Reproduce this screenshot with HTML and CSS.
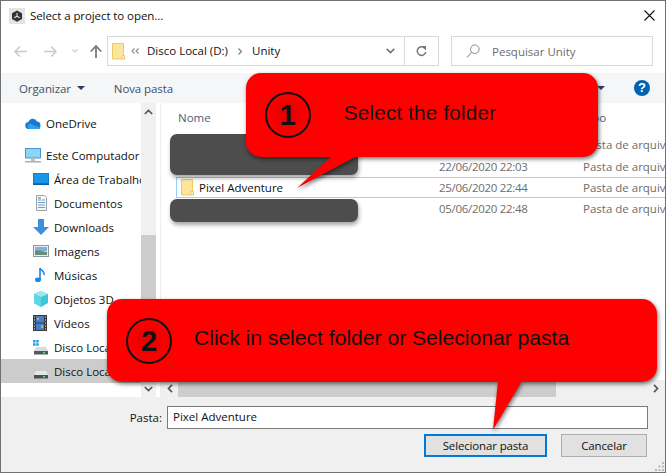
FILE: index.html
```html
<!DOCTYPE html>
<html lang="en">
  <head>
    <meta charset="UTF-8" />
    <title>Select a project to open...</title>
    <link rel="stylesheet" href="styles.css">
  </head>
  <body>
    <div class="dialog">
      <div class="titlebar">
        <svg class="unity-icon" width="16" height="16" viewBox="0 0 16 16">
          <rect width="16" height="16" fill="#e4e4e4"/>
          <path d="M8 2.500l5 2.800v5.600l-5 2.800-5-2.800V5.300z" fill="#333"/>
          <path d="M8 5v3.200l2.800 1.600M8 8.200L5.200 9.800" stroke="#e4e4e4" stroke-width="1.100" fill="none"/>
        </svg>
        <span class="title">Select a project to open...</span>
        <svg class="close-icon" width="11" height="11" viewBox="0 0 11 11">
          <path d="M.5.5l10 10M10.500.5l-10 10" stroke="#111" stroke-width="1.100"/>
        </svg>
      </div>

      <div class="addressrow">
        <div class="navbtns">
          <svg width="13" height="11" viewBox="0 0 13 11"><path d="M6 .5l-5 5 5 5M1 5.500h12" stroke="#c9c9c9" stroke-width="1.500" fill="none"/></svg>
          <svg width="13" height="11" viewBox="0 0 13 11"><path d="M7 .5l5 5-5 5M12 5.500H0" stroke="#c9c9c9" stroke-width="1.500" fill="none"/></svg>
          <svg width="6" height="4" viewBox="0 0 6 4"><path d="M.5.5L3 3 5.500.5" stroke="#c9c9c9" stroke-width="1.200" fill="none"/></svg>
          <svg width="12" height="13" viewBox="0 0 12 13"><path d="M.8 6.500L6 1l5.200 5.500M6 1v12" stroke="#7b7b7b" stroke-width="1.800" fill="none"/></svg>
        </div>
        <div class="pathbox">
          <svg class="folder" width="13" height="17" viewBox="0 0 13 17"><path d="M.5.5h11v12h-1.500v3.500H.5z" fill="#fbe69c" stroke="#eccb66"/><path d="M10 16h2.500v-4" fill="#fbe69c" stroke="#eccb66"/></svg>
          <svg class="crumb-more" width="8" height="6" viewBox="0 0 8 6"><path d="M3.500.5L1 3l2.500 2.500M7.500.5L5 3l2.500 2.500" stroke="#8a8a8a" stroke-width="1.100" fill="none"/></svg>
          <span class="crumb">Disco Local (D:)</span>
          <svg class="crumb-sep" width="4" height="7" viewBox="0 0 4 7"><path d="M.5.5l3 3-3 3" stroke="#777" stroke-width="1.100" fill="none"/></svg>
          <span class="crumb">Unity</span>
          <svg class="path-chevron" width="9" height="6" viewBox="0 0 9 6"><path d="M.7.8L4.500 4.500 8.300.8" stroke="#777" stroke-width="1.700" fill="none"/></svg>
          <div class="refresh">
            <svg width="11" height="11" viewBox="0 0 11 11"><path d="M8.800 2.200A4.300 4.300 0 1 0 9.800 6" stroke="#777" stroke-width="1.500" fill="none"/><path d="M5.500 0h4.500v4.500z" fill="#777"/></svg>
          </div>
        </div>
        <div class="searchbox">
          <svg width="14" height="14" viewBox="0 0 14 14"><circle cx="8.800" cy="5.200" r="4.300" fill="none" stroke="#8a8a8a"/><path d="M5.800 8.300L.8 13.300" stroke="#b59b80" stroke-width="1.100"/></svg>
          <span>Pesquisar Unity</span>
        </div>
      </div>

      <div class="toolbar">
        <span class="tool">Organizar</span>
        <span class="caret"></span>
        <span class="tool tool-new">Nova pasta</span>
        <span class="caret caret-view"></span>
        <span class="help">?</span>
      </div>

      <div class="main">
        <nav class="sidebar">
          <div class="navitem navitem-top navitem-drive">
            <svg width="16" height="11" viewBox="0 0 16 11"><path d="M4 11a3.500 3.500 0 0 1-.500-7A4.500 4.500 0 0 1 12 3.500 3.800 3.800 0 0 1 12.500 11z" fill="#1a77d2"/><path d="M4 11a3 3 0 0 1 1-5.500c2 0 3 1 4 2l6.500 2a2 2 0 0 1-2.500 1.500z" fill="#2ea3e6"/></svg>
            <span>OneDrive</span>
          </div>
          <div class="navitem navitem-top">
            <svg width="16" height="15" viewBox="0 0 16 15"><rect x=".5" y=".5" width="15" height="9.500" fill="#8fd3f7" stroke="#3e9ad3"/><rect x="6" y="10" width="4" height="3" fill="#b9bfc4"/><rect y="13" width="16" height="1.500" fill="#a9b0b6"/></svg>
            <span>Este Computador</span>
          </div>
          <div class="navitem">
            <svg width="16" height="12" viewBox="0 0 16 12"><rect width="16" height="11" fill="#0f7ed8"/><rect x="1" y="1" width="14" height="9" fill="#1b95ea"/><rect y="10.500" width="16" height="1.500" fill="#0a5ea8"/></svg>
            <span>&Aacute;rea de Trabalho</span>
          </div>
          <div class="navitem">
            <svg width="16" height="16" viewBox="0 0 16 16"><path d="M3.500.5h8l2 2v13h-10z" fill="#f6f7f8" stroke="#9aa3ab"/><path d="M5 5h3M9 5h3M5 7.500h7M5 10h7M5 12.500h7" stroke="#6f9fc8"/><path d="M5 3h3" stroke="#2c7cc0"/></svg>
            <span>Documentos</span>
          </div>
          <div class="navitem">
            <svg width="16" height="16" viewBox="0 0 16 16"><path d="M5 0h6v8h5l-8 8-8-8h5z" fill="#3d8fdc"/></svg>
            <span>Downloads</span>
          </div>
          <div class="navitem">
            <svg width="16" height="12" viewBox="0 0 16 12"><rect x=".5" y=".5" width="15" height="11" fill="#e6eef3" stroke="#8d979e"/><rect x="2" y="2" width="12" height="4" fill="#7fb2d9"/><path d="M2 6c3-1 6 0 12 1v3H2z" fill="#6c8b74"/></svg>
            <span>Imagens</span>
          </div>
          <div class="navitem">
            <svg width="16" height="16" viewBox="0 0 16 16"><path d="M7 1v11.500" stroke="#1b87e0" stroke-width="1.600"/><path d="M7 1c1 3 5 3 4 7" stroke="#1b87e0" stroke-width="1.400" fill="none"/><ellipse cx="5" cy="12.800" rx="3" ry="2.300" fill="#1b87e0"/></svg>
            <span>M&uacute;sicas</span>
          </div>
          <div class="navitem">
            <svg width="16" height="16" viewBox="0 0 16 16"><path d="M8 0l7 3v9l-7 4-7-4V3z" fill="#3fc4dc"/><path d="M1 3l7 3 7-3-7-3z" fill="#9be8f2"/><path d="M8 6v10l-7-4V3z" fill="#5ed6e6"/></svg>
            <span>Objetos 3D</span>
          </div>
          <div class="navitem">
            <svg width="14" height="16" viewBox="0 0 14 16"><rect width="14" height="16" fill="#3a3a3a"/><rect x="3" y="1" width="8" height="6.500" fill="#3f7fd0"/><rect x="3" y="8.500" width="8" height="6.500" fill="#3f7fd0"/><path d="M4 3h2v2H4zM8 10h2v3H8z" fill="#d9a83a"/><path d="M1 2h1M1 5h1M1 8h1M1 11h1M1 14h1M12 2h1M12 5h1M12 8h1M12 11h1M12 14h1" stroke="#eee"/></svg>
            <span class="video-label">V&iacute;deos</span>
          </div>
          <div class="navitem">
            <svg width="16" height="15" viewBox="0 0 16 15"><path d="M0 0h2.500v2.500H0zM3.200 0h2.500v2.500H3.200zM0 3.200h2.500v2.500H0zM3.200 3.200h2.500v2.500H3.200z" fill="#18a0e8"/><path d="M3 7h10l2 4H1z" fill="#d9dcde"/><rect x="1" y="11" width="14" height="3.500" fill="#55595c"/><rect x="10" y="12" width="2" height="1.500" fill="#5fe05a"/></svg>
            <span>Disco Local (C:)</span>
          </div>
          <div class="navitem navitem-selected">
            <svg width="16" height="15" viewBox="0 0 16 15"><path d="M3 7h10l2 4H1z" fill="#e4e6e7"/><rect x="1" y="11" width="14" height="3.500" fill="#4c5053"/><rect x="10" y="12" width="2" height="1.500" fill="#5fe05a"/></svg>
            <span>Disco Local (D:)</span>
          </div>
          <div class="navitem navitem-top navitem-net">
            <svg width="16" height="14" viewBox="0 0 16 14"><circle cx="8" cy="7" r="6.500" fill="#4db4d6"/></svg>
          </div>
        </nav>

        <div class="vscroll">
          <span class="vscroll-btn"><svg width="9" height="6" viewBox="0 0 9 6"><path d="M.8 5L4.500 1.500 8.200 5" stroke="#555" stroke-width="1.700" fill="none"/></svg></span>
          <span class="vscroll-gap"></span>
          <span class="vscroll-thumb"></span>
          <span class="vscroll-btn vscroll-btn-down"><svg width="9" height="6" viewBox="0 0 9 6"><path d="M.8 1L4.500 4.500 8.200 1" stroke="#555" stroke-width="1.700" fill="none"/></svg></span>
        </div>

        <div class="pane">
          <div class="filelist">
            <div class="filehead">
              <span class="col-name">Nome</span>
              <span class="col-date"></span>
              <span class="col-type">Tipo</span>
            </div>
            <div class="filerow">
              <span class="col-name"></span>
              <span class="col-date"></span>
              <span class="col-type">Pasta de arquivos</span>
            </div>
            <div class="filerow">
              <span class="col-name"></span>
              <span class="col-date">22/06/2020 22:03</span>
              <span class="col-type">Pasta de arquivos</span>
            </div>
            <div class="filerow filerow-selected">
              <span class="col-name">
                <svg class="folder" width="13" height="17" viewBox="0 0 13 17"><path d="M.5.5h11v12h-1.500v3.500H.5z" fill="#fbe69c" stroke="#eccb66"/><path d="M10 16h2.500v-4" fill="#fbe69c" stroke="#eccb66"/></svg>
                Pixel Adventure
              </span>
              <span class="col-date">25/06/2020 22:44</span>
              <span class="col-type">Pasta de arquivos</span>
            </div>
            <div class="filerow">
              <span class="col-name"></span>
              <span class="col-date">05/06/2020 22:48</span>
              <span class="col-type">Pasta de arquivos</span>
            </div>
          </div>
          <div class="hscroll">
            <span class="hscroll-btn"><svg width="6" height="9" viewBox="0 0 6 9"><path d="M5 .8L1.500 4.500 5 8.200" stroke="#555" stroke-width="1.700" fill="none"/></svg></span>
            <span class="hscroll-thumb"></span>
            <span class="hscroll-rest"><svg width="6" height="9" viewBox="0 0 6 9"><path d="M1 .8L4.500 4.500 1 8.200" stroke="#555" stroke-width="1.700" fill="none"/></svg></span>
          </div>
        </div>
      </div>

      <div class="footer">
        <div class="pathfield">
          <label class="pathlabel">Pasta:</label>
          <div class="pathinput">Pixel Adventure</div>
        </div>
        <div class="buttons">
          <button class="btn btn-primary">Selecionar pasta</button>
          <button class="btn btn-cancel">Cancelar</button>
        </div>
        <svg class="grip" width="9" height="9" viewBox="0 0 9 9"><path d="M7 0h2v2H7zM3.500 3.500h2v2h-2zM7 3.500h2v2H7zM0 7h2v2H0zM3.500 7h2v2h-2zM7 7h2v2H7z" fill="#b5b5b5"/></svg>
      </div>
    </div>

    <!-- blacked out folder names -->
    <div class="redact redact-a"></div>
    <div class="redact redact-b"></div>

    <div class="callout callout-one">
      <svg class="tail tail-one" width="65" height="35" viewBox="0 0 65 35"><path d="M35 0L0 32 60 0z" fill="#ff0000"/></svg>
      <span class="step">1</span>
      <span class="callout-text">Select the folder</span>
    </div>

    <div class="callout callout-two">
      <svg class="tail tail-two" width="34" height="50" viewBox="0 0 34 50"><path d="M5 0L0 49 29 0z" fill="#ff0000"/></svg>
      <span class="step">2</span>
      <span class="callout-text">Click in select folder or Selecionar pasta</span>
    </div>
  </body>
</html>
```

FILE: styles.css
```css
html,
body {
  margin: 0;
  padding: 0;
}

body {
  width: 666px;
  height: 473px;
  overflow: hidden;
  position: relative;
  font-family: "Open Sans", "Noto Sans", sans-serif;
  font-size: 11.5px;
  color: #111111;
  background-color: #ffffff;
}

svg {
  display: block;
  flex-shrink: 0;
}

.dialog {
  width: 666px;
  height: 473px;
  box-sizing: border-box;
  border: 1px solid #707070;
  display: flex;
  flex-direction: column;
  background-color: #ffffff;
}

/* Title bar */
.titlebar {
  height: 29px;
  display: flex;
  align-items: center;
  padding: 0 10px 0 8px;
}

.title {
  margin-left: 5px;
  flex: 1;
  letter-spacing: -0.08px;
}

/* Address row */
.addressrow {
  height: 30px;
  margin-top: 6px;
  display: flex;
  align-items: center;
}

.navbtns {
  width: 106px;
  display: flex;
  align-items: center;
  padding-left: 13px;
  box-sizing: border-box;
}

.navbtns svg:nth-child(2) {
  margin-left: 17px;
}

.navbtns svg:nth-child(3) {
  margin-left: 15px;
}

.navbtns svg:nth-child(4) {
  margin-left: 12px;
}

.pathbox {
  width: 332px;
  height: 30px;
  box-sizing: border-box;
  border: 1px solid #d9d9d9;
  display: flex;
  align-items: center;
  padding-left: 4px;
}

.crumb {
  margin-bottom: 1px;
}

.crumb-more {
  margin-left: 6px;
  margin-right: 8px;
}

.crumb-sep {
  margin: 0 10px;
}

.path-chevron {
  margin-left: auto;
  margin-right: 9px;
}

.refresh {
  width: 33px;
  height: 28px;
  border-left: 1px solid #d9d9d9;
  display: flex;
  align-items: center;
  justify-content: center;
}

.searchbox {
  width: 202px;
  height: 30px;
  margin-left: 12px;
  box-sizing: border-box;
  border: 1px solid #d9d9d9;
  display: flex;
  align-items: center;
  padding-left: 14px;
  gap: 12px;
  color: #6d6d6d;
}

/* Toolbar */
.toolbar {
  height: 30px;
  margin-top: 7px;
  background-color: #f5f6f7;
  display: flex;
  align-items: center;
  padding-left: 18px;
  color: #3f5068;
  letter-spacing: -0.1px;
}

.caret {
  width: 0;
  height: 0;
  margin-left: 6px;
  border-left: 4px solid transparent;
  border-right: 4px solid transparent;
  border-top: 4px solid #2b3f5c;
}

.tool-new {
  margin-left: 29px;
}

.caret-view {
  margin-left: auto;
}

.help {
  width: 16px;
  height: 16px;
  margin-left: 29px;
  margin-right: 15px;
  border-radius: 50%;
  background-color: #0063b1;
  color: #ffffff;
  font-family: "Liberation Sans", sans-serif;
  font-size: 13px;
  font-weight: bold;
  line-height: 16px;
  text-align: center;
}

/* Main area */
.main {
  flex: 1;
  min-height: 0;
  display: flex;
}

.sidebar {
  width: 140px;
  overflow: hidden;
  padding-top: 8px;
  box-sizing: border-box;
}

.navitem {
  height: 24px;
  display: flex;
  align-items: center;
  gap: 5px;
  padding-left: 32px;
  white-space: nowrap;
}

.navitem-top {
  padding-left: 24px;
}

.navitem-drive {
  margin-bottom: 8px;
}

.navitem-selected {
  background-color: #cccccc;
}

.navitem-net {
  margin-top: 10px;
  padding-left: 28px;
}

.video-label {
  margin-left: 2px;
}

.vscroll {
  width: 15px;
  display: flex;
  flex-direction: column;
  background-color: #f0f0f0;
}

.vscroll-btn {
  height: 17px;
  display: flex;
  align-items: center;
  justify-content: center;
}

.vscroll-gap {
  height: 115px;
}

.vscroll-thumb {
  flex: 1;
  background-color: #cdcdcd;
}

.pane {
  flex: 1;
  min-width: 0;
  margin-left: 4px;
  display: flex;
  flex-direction: column;
  border-left: 1px solid #eeeeee;
}

.filelist {
  flex: 1;
  overflow: hidden;
  padding-left: 15px;
}

.filehead {
  height: 31px;
  box-sizing: border-box;
  padding-bottom: 3px;
  display: flex;
  align-items: center;
  color: #4c607a;
}

.filerow {
  height: 21.4px;
  box-sizing: border-box;
  display: flex;
  align-items: center;
  white-space: nowrap;
  color: #6d6d6d;
}

.col-name {
  width: 263px;
  flex-shrink: 0;
  padding-left: 2px;
  box-sizing: border-box;
  display: flex;
  align-items: center;
  gap: 5px;
}

.filerow .col-name {
  color: #111111;
}

.col-date {
  width: 144px;
  flex-shrink: 0;
  letter-spacing: -0.3px;
}

.col-type {
  flex-shrink: 0;
}

.filerow-selected {
  border-top: 1px solid #99d1ff;
  border-bottom: 1px solid #99d1ff;
  border-left: 1px solid #99d1ff;
}

.filerow-selected .col-name {
  padding-left: 4px;
  width: 262px;
}

.hscroll {
  height: 17px;
  display: flex;
  background-color: #f0f0f0;
}

.hscroll-btn {
  width: 17px;
  display: flex;
  align-items: center;
  justify-content: center;
}

.hscroll-thumb {
  width: 378px;
  background-color: #cdcdcd;
}

.hscroll-rest {
  flex: 1;
  display: flex;
  align-items: center;
  justify-content: flex-end;
  padding-right: 6px;
}

/* Footer */
.footer {
  height: 75px;
  flex-shrink: 0;
  background-color: #f0f0f0;
  position: relative;
  padding: 9px 17px 0 0;
  box-sizing: border-box;
}

.pathfield {
  display: flex;
  align-items: center;
}

.pathlabel {
  width: 161px;
  text-align: right;
  margin-right: 5px;
}

.pathinput {
  flex: 1;
  height: 23px;
  box-sizing: border-box;
  border: 1px solid #7a7a7a;
  background-color: #ffffff;
  padding-left: 5px;
  line-height: 20px;
}

.buttons {
  display: flex;
  justify-content: flex-end;
  gap: 14px;
  margin: 5px 1px 0 0;
}

.btn {
  height: 23px;
  box-sizing: border-box;
  background-color: #e1e1e1;
  border: 1px solid #adadad;
  font-family: inherit;
  font-size: 11.5px;
  letter-spacing: -0.15px;
  color: #111111;
  padding: 0;
}

.btn-primary {
  width: 123px;
  border: 2px solid #0078d7;
}

.btn-cancel {
  width: 86px;
}

.grip {
  position: absolute;
  right: 1px;
  bottom: 1px;
}

/* Overlays painted on the screenshot */
.redact {
  position: absolute;
  left: 170px;
  width: 188px;
  background-color: #4d4d4d;
  border-radius: 7px;
  box-shadow: 1px 3px 4px rgba(0, 0, 0, 0.35);
}

.redact-a {
  top: 134px;
  height: 41px;
}

.redact-b {
  top: 199px;
  height: 23px;
}

.callout {
  position: absolute;
  box-sizing: border-box;
  background-color: #ff0000;
  border-radius: 15px;
  display: flex;
  align-items: center;
  padding-left: 19px;
  color: #111111;
  font-family: "Liberation Sans", sans-serif;
  font-size: 21.1px;
  white-space: nowrap;
  filter: drop-shadow(1px 2px 2px rgba(0, 0, 0, 0.55));
}

.callout-one {
  left: 246px;
  top: 73px;
  width: 352px;
  height: 84px;
}

.callout-two {
  left: 107px;
  top: 299px;
  width: 550px;
  height: 83px;
}

.step {
  width: 46px;
  height: 46px;
  box-sizing: border-box;
  border: 2px solid #111111;
  border-radius: 50%;
  font-size: 29px;
  font-weight: bold;
  line-height: 42px;
  text-align: center;
  background: radial-gradient(circle, #e00000 0%, #ff0000 75%);
}

.callout-one .callout-text {
  margin-left: 33px;
  margin-bottom: 4px;
}

.callout-two .callout-text {
  margin-left: 22px;
  margin-bottom: 5px;
}

.tail {
  position: absolute;
}

.tail-one {
  left: 51px;
  top: 83px;
}

.tail-two {
  left: 386px;
  top: 82px;
}
```
